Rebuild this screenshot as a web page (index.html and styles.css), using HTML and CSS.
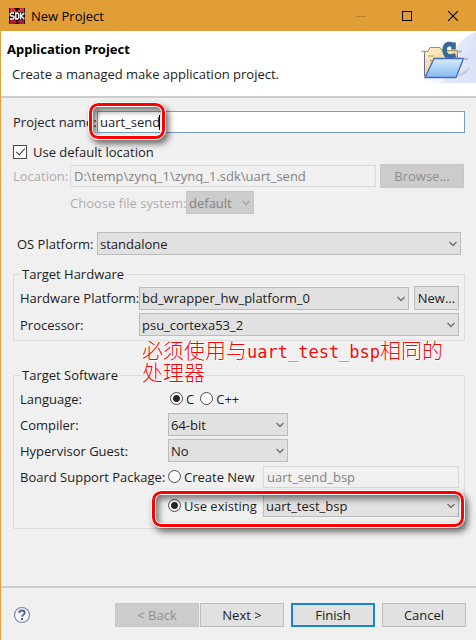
FILE: index.html
```html
<!DOCTYPE html>
<html lang="en">
<head>
<meta charset="utf-8">
<title>New Project</title>
<link rel="stylesheet" href="styles.css">
</head>
<body>
<svg class="defs" aria-hidden="true">
  <symbol id="chevron" viewBox="0 0 8 6"><path d="M.5 1 4 4.500 7.500 1" fill="none" stroke="currentColor" stroke-width="1.300"/></symbol>
</svg>
<div class="window">
  <header class="titlebar">
    <svg class="app-icon" viewBox="0 0 16 16" aria-hidden="true">
      <rect width="16" height="16" fill="#160808"/>
      <path d="M1 0h4l3 4 3-4h4v4H1z" fill="#d8362c"/>
      <path d="M1 12h3l1-1 3 3 3-3 2 1h2v4h-4l-3-2-3 2H1z" fill="#a81f3c"/>
      <rect y="4" width="16" height="8" fill="#2a1012"/>
      <g fill="none" stroke="#fff" stroke-width="1.300"><path d="M5 5H2.200L1.200 6v1l1 1h2l1 1v1l-1 1H1"/><path d="M6.800 5v6h1.700l1.300-1.500v-3L8.500 5z"/><path d="M11.600 4.500v7M15.300 4.800l-3 3.200 3 3.300"/></g>
    </svg>
    <span class="title">New Project</span>
    <button class="win-btn" type="button" aria-label="Minimize" disabled><svg viewBox="0 0 10 10"><path d="M0 5.500h10" stroke="#b98132"/></svg></button>
    <button class="win-btn" type="button" aria-label="Maximize"><svg viewBox="0 0 10 10"><rect x=".5" y=".5" width="9" height="9" fill="none" stroke="#000"/></svg></button>
    <button class="win-btn" type="button" aria-label="Close"><svg viewBox="0 0 10 10"><path d="m0 0 10 10M10 0 0 10" stroke="#000" stroke-width="1.100"/></svg></button>
  </header>
  <section class="banner">
    <div class="banner-text">
      <h1>Application Project</h1>
      <p>Create a managed make application project.</p>
    </div>
    <svg class="banner-icon" viewBox="0 0 58 54" aria-hidden="true">
      <defs>
        <linearGradient id="glow" x1="0" x2="1"><stop offset="0" stop-color="#fff"/><stop offset="1" stop-color="#dce3f6"/></linearGradient>
        <linearGradient id="front" x1="0" y1="0" x2="0" y2="1"><stop offset="0" stop-color="#d9ecfb"/><stop offset="1" stop-color="#86b9ee"/></linearGradient>
        <linearGradient id="back" x1="0" y1="0" x2="1" y2="1"><stop offset="0" stop-color="#fff3cf"/><stop offset="1" stop-color="#e3bd70"/></linearGradient>
      </defs>
      <path d="M58 1Q43 6 36 20 20 31 2 52h56z" fill="url(#glow)"/>
      <path d="M58 17Q35 21 24 52h34z" fill="#d9e1f6" opacity=".55"/>
      <path d="M40 44 52 36Q50 43 41 46z" fill="#b5b9cb" opacity=".6"/>
      <path d="M3 20.500h4M37 20.500h7" stroke="#8e8a93" stroke-width="1.500" opacity=".7"/>
      <path d="M6.500 45V20.500H10l2-4h10l2 3h15.500V34z" fill="url(#back)" stroke="#a8895f"/>
      <path d="M6.500 45V23" stroke="#6b68a8"/>
      <path d="M10 25h6" stroke="#b99b60"/>
      <path d="M35.500 18.500v-7M35.500 14Q29.500 11.500 27.300 15.500 25.500 20.500 28.500 24.300 32 26.800 37.500 24" fill="none" stroke="#33699b" stroke-width="4.600"/>
      <path d="M16 27.500h29.500L38 46.500H7z" fill="url(#front)" stroke="#4564c4" stroke-width="1.300"/>
      <path d="M44 28h6M12 29.500h3" stroke="#8c93b0"/>
    </svg>
  </section>
  <form class="form" onsubmit="return false">
    <div class="row name-row">
      <label class="name-label" for="name">Project name:</label>
      <div class="field grow"><input class="text focused" id="name" type="text" value="uart_send"><i class="caret"></i><i class="mark mark-name"></i></div>
    </div>
    <label class="row check"><input class="checkbox" type="checkbox" checked><span>Use default location</span></label>
    <div class="row location-row off">
      <label class="location-label" for="loc">Location:</label>
      <input class="text grow" id="loc" type="text" value="D:\temp\zynq_1\zynq_1.sdk\uart_send" disabled>
      <button class="btn browse" type="button" disabled>Browse...</button>
    </div>
    <div class="row fs-row off">
      <label for="fs">Choose file system:</label>
      <div class="field fs"><select id="fs" disabled><option>default</option></select><svg class="chev"><use href="#chevron"/></svg></div>
    </div>
    <div class="row os-row">
      <label class="os-label" for="os">OS Platform:</label>
      <div class="field grow"><select id="os"><option>standalone</option></select><svg class="chev"><use href="#chevron"/></svg></div>
    </div>
    <fieldset class="group hardware">
      <legend>Target Hardware</legend>
      <div class="row">
        <label class="hw-label" for="hw">Hardware Platform:</label>
        <div class="field grow"><select id="hw"><option>bd_wrapper_hw_platform_0</option></select><svg class="chev"><use href="#chevron"/></svg></div>
        <button class="btn new" type="button">New...</button>
      </div>
      <div class="row">
        <label class="hw-label" for="cpu">Processor:</label>
        <div class="field grow"><select id="cpu"><option>psu_cortexa53_2</option></select><svg class="chev"><use href="#chevron"/></svg>
          <p class="note">必须使用与<span>uart_test_bsp</span>相同的<br>处理器</p>
        </div>
      </div>
    </fieldset>
    <fieldset class="group software">
      <legend>Target Software</legend>
      <div class="row">
        <span class="sw-label">Language:</span>
        <div class="langs">
          <label class="radio"><input type="radio" name="lang" checked><span>C</span></label>
          <label class="radio"><input type="radio" name="lang"><span>C++</span></label>
        </div>
      </div>
      <div class="row">
        <label class="sw-label" for="comp">Compiler:</label>
        <div class="field short"><select id="comp"><option>64-bit</option></select><svg class="chev"><use href="#chevron"/></svg></div>
      </div>
      <div class="row">
        <label class="sw-label" for="hyp">Hypervisor Guest:</label>
        <div class="field short"><select id="hyp"><option>No</option></select><svg class="chev"><use href="#chevron"/></svg></div>
      </div>
      <div class="row">
        <span class="sw-label">Board Support Package:</span>
        <label class="radio bsp"><input type="radio" name="bsp"><span>Create New</span></label>
        <input class="text grow" type="text" value="uart_send_bsp" aria-label="New package name" disabled>
      </div>
      <div class="row existing">
        <span class="sw-label"></span>
        <label class="radio bsp"><input type="radio" name="bsp" checked><span>Use existing</span></label>
        <div class="field grow"><select aria-label="Existing package"><option>uart_test_bsp</option></select><svg class="chev"><use href="#chevron"/></svg></div>
        <i class="mark mark-bsp"></i>
      </div>
    </fieldset>
  </form>
  <footer class="footer">
    <button class="help" type="button" aria-label="Help"><svg viewBox="0 0 18 18"><circle cx="9" cy="9" r="7.500" fill="#f6f7fa" stroke="#7a86a6" stroke-width="1.200"/><path d="M6.300 7Q6.300 4.500 9 4.500T11.700 7Q11.700 8.200 10.200 9 9.100 9.600 9.100 10.800" fill="none" stroke="#53648e" stroke-width="1.900"/><rect x="8" y="12" width="2" height="2" fill="#53648e"/></svg></button>
    <div class="pair">
      <button class="btn" type="button" disabled>&lt; Back</button>
      <button class="btn" type="button">Next &gt;</button>
    </div>
    <button class="btn primary" type="button">Finish</button>
    <button class="btn" type="button">Cancel</button>
  </footer>
</div>
</body>
</html>
```
FILE: styles.css
```css
* { box-sizing: border-box; }
body {
  margin: 0;
  background: #f0f0f0;
  color: #1c1c1c;
  font: 13px/18px "Open Sans", "Noto Sans", sans-serif;
}
.defs { position: absolute; width: 0; height: 0; }
.window {
  min-height: 100vh;
  display: flex;
  flex-direction: column;
  border-left: 1px solid #e5a03a;
}
.titlebar {
  display: flex;
  align-items: center;
  height: 31px;
  padding-left: 8px;
  background: #e29e36;
  color: #000;
}
.app-icon { width: 16px; height: 16px; }
.title { flex: 1; margin-left: 6px; }
.win-btn {
  width: 46px;
  height: 30px;
  padding: 0;
  border: 0;
  background: none;
}
.win-btn svg { display: block; width: 10px; height: 10px; margin: auto; }
.banner {
  display: flex;
  justify-content: space-between;
  height: 67px;
  background: #fff;
  border-bottom: 2px solid #cdcdcd;
}
.banner-text { padding: 9px 0 0 6px; }
h1 { margin: 0; font: bold 13px/18px "Noto Sans", sans-serif; color: #000; }
.banner p { margin: 7px 0 0 5px; }
.banner-icon { width: 58px; height: 54px; }
.form { flex: 1; padding: 13px 11px 0 12px; }
.row { display: flex; align-items: center; }
.grow { flex: 1; min-width: 0; }
.field { position: relative; }
.text, select, .btn {
  font: inherit;
  color: inherit;
  border-radius: 0;
  margin: 0;
}
.text {
  display: block;
  width: 100%;
  height: 22px;
  padding: 0 3px;
  border: 1px solid #d9d9d9;
  background: #f0f0f0;
}
.text:disabled { color: #838383; }
.focused { background: #fff; border-color: #76a0c6; color: #1c1c1c; padding: 0 2px; }
select {
  appearance: none;
  display: block;
  width: 100%;
  height: 23px;
  padding: 0 20px 0 2px;
  border: 1px solid #bcbcbc;
  background: #e1e1e1;
  opacity: 1;
}
select:disabled { background: #ccc; border-color: #c6c6c6; color: #838383; }
.chev {
  position: absolute;
  right: 4px;
  top: 9px;
  width: 8px;
  height: 6px;
  color: #6c6c6c;
  pointer-events: none;
}
.off .chev { color: #a2a2a2; }
.btn {
  width: 84px;
  height: 24px;
  padding: 0;
  border: 1px solid #bcbcbc;
  background: #e1e1e1;
}
.btn:disabled { background: #ccc; border-color: #c6c6c6; color: #8f8f8f; }
.off { color: #adadad; }
.name-label { width: 84px; white-space: nowrap; }
.caret {
  position: absolute;
  left: 62px;
  top: 4px;
  width: 1px;
  height: 15px;
  background: #000;
}
.mark {
  position: absolute;
  border: 3px solid #f00;
  border-radius: 9px;
  outline: 1px solid #fff;
  box-shadow: 3px 4px 6px 1px rgba(0, 0, 0, .55), inset 0 0 0 1px #fff, inset 3px 4px 6px 1px rgba(0, 0, 0, .5);
  pointer-events: none;
}
.mark-name { left: -8px; top: -8px; width: 76px; height: 36px; }
.mark-bsp { left: 132px; right: -5px; top: -3px; height: 36px; }
.check { margin-top: 10px; gap: 6px; }
.checkbox {
  appearance: none;
  width: 14px;
  height: 14px;
  margin: 0;
  border: 1px solid #4a4a4a;
  background: #fff;
}
.checkbox:checked::after {
  content: "";
  display: block;
  width: 4px;
  height: 8px;
  margin: 0 0 0 4px;
  border: solid #333;
  border-width: 0 1px 1px 0;
  transform: rotate(42deg);
}
.location-row { margin-top: 3px; padding-right: 1px; }
.location-label { width: 57px; }
.browse { margin-left: 4px; }
.fs-row { margin-top: 3px; padding-left: 57px; }
.fs-row label { width: 116px; white-space: nowrap; }
.fs { width: 68px; }
.os-row { margin-top: 18px; padding: 0 4px; }
.os-label { width: 80px; }
.group {
  margin: 0;
  padding: 0 5px 4px 6px;
  border: 1px solid #dcdcdc;
  min-width: 0;
}
legend { padding: 0 2px; height: 18px; margin: 0; }
.hardware { margin-top: 10px; }
.hardware .row { margin-top: 3px; }
.hw-label { width: 119px; white-space: nowrap; }
.new { width: 45px; margin-left: 5px; }
.note {
  position: absolute;
  left: 3px;
  top: 25px;
  margin: 0;
  color: #f00;
  font: 300 21px/22px "Noto Sans CJK SC", sans-serif;
  text-shadow: 1px 0 #fff, -1px 0 #fff, 0 1px #fff, 0 -1px #fff;
  white-space: nowrap;
}
.note span { font: 17px/16px "DejaVu Sans Mono", monospace; }
.software { margin-top: 25px; padding-bottom: 11px; }
.software .row { min-height: 23px; margin-top: 3px; }
.software .existing { position: relative; margin-top: 6px; }
.sw-label { width: 148px; white-space: nowrap; }
.langs { display: flex; gap: 6px; padding-left: 2px; }
.radio { display: flex; align-items: center; gap: 3px; white-space: nowrap; }
.radio input {
  appearance: none;
  width: 13px;
  height: 13px;
  margin: 0;
  border: 1px solid #4a4a4a;
  border-radius: 50%;
  background: #fff;
}
.radio input:checked { background: radial-gradient(circle, #262626 3px, #fff 4px); }
.bsp { width: 95px; }
.short { width: 120px; }
.footer {
  display: flex;
  align-items: center;
  gap: 7px;
  height: 54px;
  padding: 2px 10px 0 12px;
  border-top: 2px solid #cdcdcd;
}
.help { width: 18px; height: 18px; padding: 0; border: 0; background: none; margin-right: auto; }
.help svg { display: block; width: 18px; height: 18px; }
.pair { display: flex; gap: 1px; }
.primary { border: 2px solid #1883d7; }
```
